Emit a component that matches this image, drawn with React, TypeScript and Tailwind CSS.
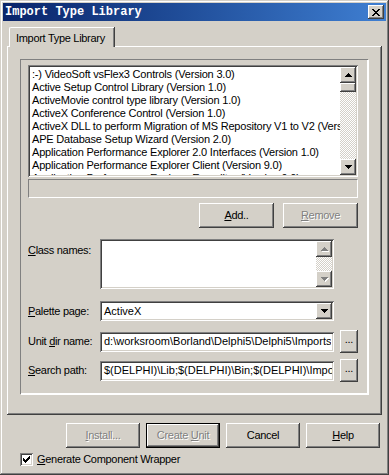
const raised =
  "bg-[#d4d0c8] shadow-[inset_-1px_-1px_#404040,inset_1px_1px_#ffffff,inset_-2px_-2px_#808080,inset_2px_2px_#d4d0c8]";
const sunken =
  "bg-white shadow-[inset_1px_1px_#808080,inset_-1px_-1px_#ffffff,inset_2px_2px_#404040,inset_-2px_-2px_#d4d0c8]";
const grayed = "text-[#808080] [text-shadow:1px_1px_0_#ffffff]";
const checkered =
  "bg-[image:repeating-conic-gradient(#ffffff_0_25%,#d4d0c8_0_50%)] bg-[length:2px_2px]";

const items = [
  ":-) VideoSoft vsFlex3 Controls (Version 3.0)",
  "Active Setup Control Library (Version 1.0)",
  "ActiveMovie control type library (Version 1.0)",
  "ActiveX Conference Control (Version 1.0)",
  "ActiveX DLL to perform Migration of MS Repository V1 to V2 (Version 1.0)",
  "APE Database Setup Wizard (Version 2.0)",
  "Application Performance Explorer 2.0 Interfaces (Version 1.0)",
  "Application Performance Explorer Client (Version 9.0)",
  "Application Performance Explorer Expediter (Version 9.0)",
];

function Arrow({ down, disabled }: { down?: boolean; disabled?: boolean }) {
  // pixel triangle, 7x4
  const d = down
    ? "M0 0h7v1h-7z M1 1h5v1h-5z M2 2h3v1h-3z M3 3h1v1h-1z"
    : "M3 0h1v1h-1z M2 1h3v1h-3z M1 2h5v1h-5z M0 3h7v1h-7z";
  return (
    <svg width="8" height="5" viewBox="0 0 8 5" shapeRendering="crispEdges">
      {disabled && <path d={d} fill="#ffffff" transform="translate(1 1)" />}
      <path d={d} fill={disabled ? "#808080" : "#000000"} />
    </svg>
  );
}

function ScrollBar({ disabled, thumb }: { disabled?: boolean; thumb?: boolean }) {
  return (
    <div className="flex flex-col w-[16px] h-full shrink-0">
      <div className={`${raised} h-[16px] flex items-center justify-center pt-[1px] pl-[1px]`}>
        <Arrow disabled={disabled} />
      </div>
      <div className={`flex-1 ${checkered}`}>
        {thumb && <div className={`${raised} h-[9px]`} />}
      </div>
      <div className={`${raised} h-[16px] flex items-center justify-center pt-[1px] pl-[1px]`}>
        <Arrow down disabled={disabled} />
      </div>
    </div>
  );
}

function Button({
  children,
  w,
  disabled,
  isDefault,
}: {
  children: React.ReactNode;
  w: string;
  disabled?: boolean;
  isDefault?: boolean;
}) {
  const face = (
    <div
      className={`${raised} h-full w-full flex items-center justify-center ${disabled ? grayed : ""}`}
    >
      {children}
    </div>
  );
  if (isDefault) {
    return <div className={`${w} h-[25px] border border-black`}>{face}</div>;
  }
  return <div className={`${w} h-[25px]`}>{face}</div>;
}

function Check() {
  return (
    <svg width="7" height="7" viewBox="0 0 7 7" shapeRendering="crispEdges">
      <path
        fill="#000000"
        d="M6 0h1v1h-1z M5 1h2v1h-2z M0 2h1v1h-1z M4 2h3v1h-3z M0 3h2v1h-2z M3 3h3v1h-3z M0 4h5v1h-5z M1 5h3v1h-3z M2 6h1v1h-1z"
      />
    </svg>
  );
}

export default function App() {
  return (
    <div className="w-[389px] h-[475px] bg-[#d4d0c8] p-[3px] flex flex-col font-['Liberation_Sans',Arial,sans-serif] text-[11px] leading-[13px] tracking-[-0.3px] text-black shadow-[inset_-1px_-1px_#404040,inset_1px_1px_#d4d0c8,inset_-2px_-2px_#808080,inset_2px_2px_#ffffff]">
      {/* title bar */}
      <div className="h-[18px] flex items-center justify-between pl-[2px] pr-[2px] bg-gradient-to-r from-[#0a246a] to-[#3f7fd2]">
        <span className="font-['Liberation_Mono',monospace] font-bold text-[12px] tracking-normal text-white">
          Import Type Library
        </span>
        <div className={`${raised} w-[16px] h-[14px] flex items-center justify-center`}>
          <svg width="8" height="7" viewBox="0 0 8 7" shapeRendering="crispEdges">
            <path
              fill="#000000"
              d="M0 0h2v1h-2z M6 0h2v1h-2z M1 1h2v1h-2z M5 1h2v1h-2z M2 2h4v1h-4z M3 3h2v1h-2z M2 4h4v1h-4z M1 5h2v1h-2z M5 5h2v1h-2z M0 6h2v1h-2z M6 6h2v1h-2z"
            />
          </svg>
        </div>
      </div>

      <div className="flex-1 flex flex-col px-[4px] pt-[6px]">
        {/* tab */}
        <div className="flex">
          <div className="relative z-10 ml-[2px] w-[105px] h-[20px] -mb-[1px] bg-[#d4d0c8] border-t border-l border-white rounded-tl-[2px] shadow-[inset_-1px_0_#808080,1px_0_#404040] pl-[6px] pt-[4px]">
            Import Type Library
          </div>
        </div>

        {/* tab panel */}
        <div className="h-[369px] pt-[13px] pl-[13px] shadow-[inset_-1px_-1px_#404040,inset_1px_1px_#ffffff,inset_-2px_-2px_#808080]">
          <div className="w-[348px] h-[335px] border-t border-l border-[#808080] shadow-[inset_-1px_-1px_#ffffff,1px_1px_#ffffff] pt-[5px] pl-[7px]">
            {/* library list */}
            <div className={`${sunken} w-[330px] h-[112px] p-[2px] flex`}>
              <div className="flex-1 overflow-hidden whitespace-nowrap pl-[2px] pt-[1px] tracking-[-0.2px]">
                {items.map((it) => (
                  <div key={it}>{it}</div>
                ))}
              </div>
              <ScrollBar thumb />
            </div>

            {/* path panel */}
            <div className="mt-[2px] w-[330px] h-[19px] border-t border-l border-[#808080] border-b border-r border-b-white border-r-white" />

            <div className="w-[330px] flex justify-end gap-[9px] mt-[5px]">
              <Button w="w-[75px]">
                <span>
                  <u>A</u>dd..
                </span>
              </Button>
              <Button w="w-[75px]" disabled>
                <span>
                  <u>R</u>emove
                </span>
              </Button>
            </div>

            {/* class names */}
            <div className="flex mt-[11px]">
              <div className="w-[72px] pt-[5px]">
                <u>C</u>lass names:
              </div>
              <div className={`${sunken} w-[234px] h-[50px] p-[2px] flex justify-end`}>
                <ScrollBar disabled />
              </div>
            </div>

            {/* palette page */}
            <div className="flex items-center mt-[12px]">
              <div className="w-[72px]">
                <u>P</u>alette page:
              </div>
              <div className={`${sunken} w-[234px] h-[20px] p-[2px] flex items-center`}>
                <div className="flex-1 pl-[2px] tracking-normal">ActiveX</div>
                <div className={`${raised} w-[16px] h-[16px] flex items-center justify-center pt-[1px] pl-[1px]`}>
                  <Arrow down />
                </div>
              </div>
            </div>

            {/* unit dir */}
            <div className="flex items-center mt-[9px] h-[23px]">
              <div className="w-[72px]">
                Unit <u>d</u>ir name:
              </div>
              <div className={`${sunken} w-[234px] h-[20px] p-[2px] flex items-center`}>
                <div className="pl-[2px] overflow-hidden whitespace-nowrap tracking-normal">
                  d:\worksroom\Borland\Delphi5\Delphi5\Imports
                </div>
              </div>
              <div className={`${raised} ml-[6px] w-[18px] h-[23px] flex items-end justify-center pb-[7px]`}>
                ...
              </div>
            </div>

            {/* search path */}
            <div className="flex items-center mt-[6px] h-[23px]">
              <div className="w-[72px]">
                <u>S</u>earch path:
              </div>
              <div className={`${sunken} w-[234px] h-[20px] p-[2px] flex items-center`}>
                <div className="pl-[2px] overflow-hidden whitespace-nowrap tracking-normal">
                  $(DELPHI)\Lib;$(DELPHI)\Bin;$(DELPHI)\Imports
                </div>
              </div>
              <div className={`${raised} ml-[6px] w-[18px] h-[23px] flex items-end justify-center pb-[7px]`}>
                ...
              </div>
            </div>
          </div>
        </div>

        {/* dialog buttons */}
        <div className="flex justify-end gap-[6px] mt-[8px] pr-[2px]">
          <Button w="w-[74px]" disabled>
            <span>
              <u>I</u>nstall...
            </span>
          </Button>
          <Button w="w-[74px]" disabled isDefault>
            <span>
              Create <u>U</u>nit
            </span>
          </Button>
          <Button w="w-[74px]">Cancel</Button>
          <Button w="w-[74px]">
            <span>
              <u>H</u>elp
            </span>
          </Button>
        </div>

        {/* checkbox */}
        <div className="flex items-center gap-[4px] mt-[5px] ml-[13px]">
          <div className={`${sunken} w-[13px] h-[13px] flex items-center justify-center`}>
            <Check />
          </div>
          <span>
            <u>G</u>enerate Component Wrapper
          </span>
        </div>
      </div>
    </div>
  );
}
